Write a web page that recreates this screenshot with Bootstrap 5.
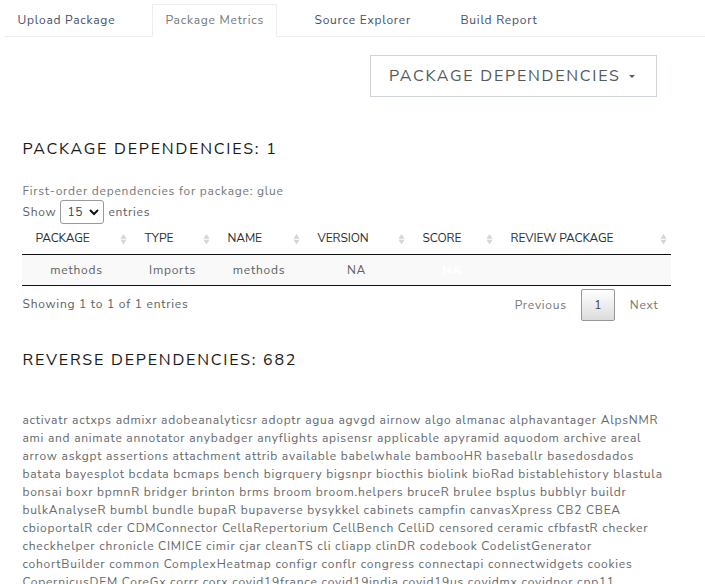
<!DOCTYPE html>
<html lang="en">
<head>
<meta charset="utf-8">
<title>Package Metrics</title>
<link href="https://cdn.jsdelivr.net/npm/bootstrap@5.3.0/dist/css/bootstrap.min.css" rel="stylesheet">
<style>
html,body{height:584px;overflow:hidden}
body{font-family:"Nunito Sans",Lato,sans-serif;font-size:12px;line-height:18px;color:#5d6164;letter-spacing:.75px;background:#fff}
.main-tabs{margin:4px 0 0 4px;height:33px;border-bottom:1px solid #eceeef;flex-wrap:nowrap}
.main-tabs .nav-link{height:33px;padding:6px 12px 7px 12.5px;border:1px solid transparent;border-radius:0;color:#465069;white-space:nowrap;margin-bottom:-1px}
.main-tabs .nav-link.active{border-color:#eceeef #eceeef #fff;color:#74787c}
.t1{width:148px}.t2{width:149px}.t3{width:146px}
.t2 .nav-link{width:125px}
.dep-btn{width:287px;height:42px;margin:18px 48px 0 0;border:1px solid #ced4da;border-radius:0;font-size:16px;line-height:24px;letter-spacing:1.75px;color:#55595c;padding:0 21px 0 18px;text-transform:uppercase;white-space:nowrap}
.dep-btn::after{border-width:3.5px 3.5px 0;margin-left:0;flex:none}
.content{margin-left:22px;width:649px;padding-top:43px}
.sec-title{font-size:16px;line-height:18px;font-weight:400;letter-spacing:1.78px;color:#1a1a1a;text-transform:uppercase;white-space:nowrap;padding-left:.5px}
.intro{margin-top:24px;color:#74787c;padding-left:.5px}
.show-line{height:24px;padding-left:.5px}
.len{width:44px;height:24px;border:1px solid #999;border-radius:3px;margin:0 4px;padding:0 4px 0 6px;color:#444}
.dt{height:64px;margin-top:-1px}
.dt-row{display:grid;grid-template-columns:109px 83px 90px 105px 88px 174px}
.dt-head{height:32px;border-bottom:1px solid #111;color:#2b2f33;letter-spacing:-.1px}
.dt-head>div{padding:6px 0 0 13.5px;position:relative}
.dt-head svg{position:absolute;right:4px;top:11px}
.dt-body{height:31px;background:#f9f9f9;border-bottom:1px solid #111;line-height:30px;text-align:center}
.score{color:#fff;font-weight:800;padding-right:2px}
.info{margin-top:2px;height:32px}
.info>span{padding:6px 0 0 .5px}
.page-now{width:34px;height:32px;border:1px solid #979797;border-radius:2px;background:linear-gradient(#fff,#dcdcdc);color:#444;line-height:30px;margin:0 14.5px 0 14.5px}
.pager{margin-right:12.5px;color:#777;line-height:32px}
.info+.sec-title{margin-top:30px}
.pkg{white-space:nowrap;color:#65696d;margin-top:42px;padding-left:.4px}
</style>
<script src="https://cdn.jsdelivr.net/npm/bootstrap@5.3.0/dist/js/bootstrap.bundle.min.js"></script>
</head>
<body>
<svg class="d-none"><symbol id="sort" viewBox="0 0 7 11"><path d="M3.5 0 6.5 4.7H.5zM3.5 10.5 .5 5.8h6z" fill="#d5d5d5"/></symbol></svg>
<ul class="nav main-tabs">
<li class="t1"><a class="nav-link">Upload Package</a></li>
<li class="t2"><a class="nav-link active">Package Metrics</a></li>
<li class="t3"><a class="nav-link">Source Explorer</a></li>
<li class="t4"><a class="nav-link">Build Report</a></li>
</ul>
<div class="d-flex justify-content-end"><button class="btn dep-btn dropdown-toggle d-flex align-items-center justify-content-between"><span>Package Dependencies</span></button></div>
<main class="content">
<h2 class="sec-title mb-0">Package Dependencies: 1</h2>
<p class="intro mb-0">First-order dependencies for package: glue</p>
<div class="d-flex align-items-center show-line"><span>Show</span><span class="len d-flex align-items-center justify-content-between">15<svg width="10" height="7" viewBox="0 0 10 7"><path d="m1 1 4 4 4-4" fill="none" stroke="#111" stroke-width="2"/></svg></span><span>entries</span></div>
<div class="dt">
<div class="dt-row dt-head">
<div>PACKAGE<svg width="7" height="11"><use href="#sort"/></svg></div><div>TYPE<svg width="7" height="11"><use href="#sort"/></svg></div><div>NAME<svg width="7" height="11"><use href="#sort"/></svg></div><div>VERSION<svg width="7" height="11"><use href="#sort"/></svg></div><div>SCORE<svg width="7" height="11"><use href="#sort"/></svg></div><div>REVIEW PACKAGE<svg width="7" height="11"><use href="#sort"/></svg></div>
</div>
<div class="dt-row dt-body"><div>methods</div><div>Imports</div><div>methods</div><div>NA</div><div class="score">NA</div><div></div></div>
</div>
<div class="d-flex justify-content-between info"><span>Showing 1 to 1 of 1 entries</span><div class="d-flex pager"><span>Previous</span><span class="page-now text-center">1</span><span>Next</span></div></div>
<h2 class="sec-title mb-0">Reverse Dependencies: 682</h2>
<div class="pkg">
<div>activatr actxps admixr adobeanalyticsr adoptr agua agvgd airnow algo almanac alphavantager AlpsNMR</div>
<div>ami and animate annotator anybadger anyflights apisensr applicable apyramid aquodom archive areal</div>
<div>arrow askgpt assertions attachment attrib available babelwhale bambooHR baseballr basedosdados</div>
<div>batata bayesplot bcdata bcmaps bench bigrquery bigsnpr biocthis biolink bioRad bistablehistory blastula</div>
<div>bonsai boxr bpmnR bridger brinton brms broom broom.helpers bruceR brulee bsplus bubblyr buildr</div>
<div>bulkAnalyseR bumbl bundle bupaR bupaverse bysykkel cabinets campfin canvasXpress CB2 CBEA</div>
<div>cbioportalR cder CDMConnector CellaRepertorium CellBench CelliD censored ceramic cfbfastR checker</div>
<div>checkhelper chronicle CIMICE cimir cjar cleanTS cli cliapp clinDR codebook CodelistGenerator</div>
<div>cohortBuilder common ComplexHeatmap configr conflr congress connectapi connectwidgets cookies</div>
<div>CopernicusDEM CoreGx corrr corx covid19france covid19india covid19us covidmx covidnor cpp11</div>
</div>
</main>
</body>
</html>
